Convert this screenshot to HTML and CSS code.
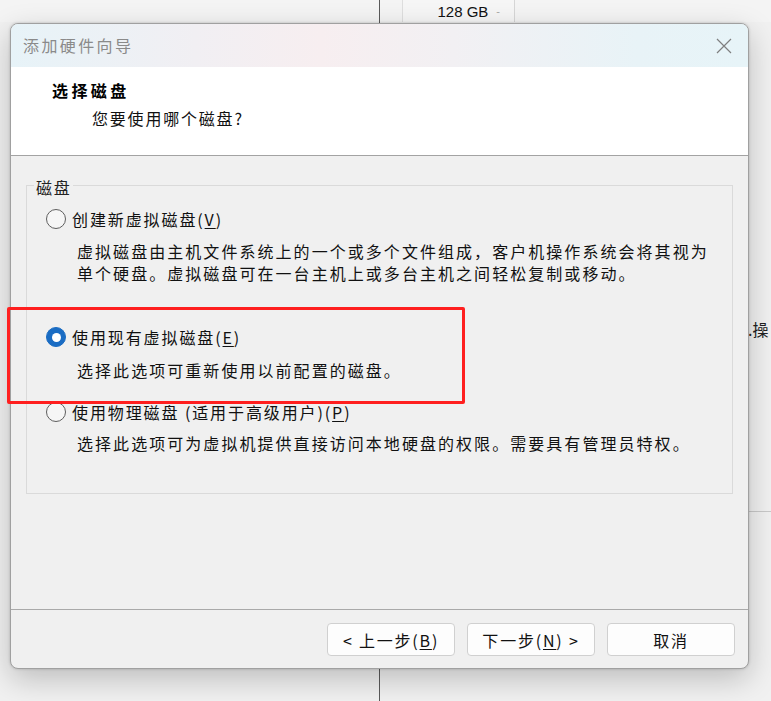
FILE: index.html
```html
<!DOCTYPE html>
<html lang="zh-CN">
<head>
<meta charset="utf-8">
<title>添加硬件向导</title>
<link rel="stylesheet" href="styles.css">
</head>
<body>
<div class="desktop">
  <div class="topstrip">
    <div class="cell"><span class="size">128 GB</span><span class="dash">-</span></div>
  </div>
  <div class="vline"></div>
  <div class="side-text">.操</div>
  <div class="side-line"></div>

  <div class="dialog">
    <div class="titlebar">
      <span class="title">添加硬件向导</span>
      <svg class="close" width="16" height="16" viewBox="0 0 16 16"><path d="M1 1L15 15M15 1L1 15" stroke="#7f7f7f" stroke-width="1.2" fill="none"/></svg>
    </div>
    <div class="header">
      <div class="h-title">选择磁盘</div>
      <div class="h-sub">您要使用哪个磁盘?</div>
    </div>
    <div class="body">
      <div class="content">
        <div class="group">
          <div class="legend">磁盘</div>
          <div class="option opt1">
            <div class="opt-row"><span class="radio"></span><span class="label">创建新虚拟磁盘(<u>V</u>)</span></div>
            <div class="desc">虚拟磁盘由主机文件系统上的一个或多个文件组成，客户机操作系统会将其视为<br>单个硬盘。虚拟磁盘可在一台主机上或多台主机之间轻松复制或移动。</div>
          </div>
          <div class="option opt2">
            <div class="opt-row"><span class="radio checked"></span><span class="label">使用现有虚拟磁盘(<u>E</u>)</span></div>
            <div class="desc d2">选择此选项可重新使用以前配置的磁盘。</div>
          </div>
          <div class="option opt3">
            <div class="opt-row"><span class="radio"></span><span class="label">使用物理磁盘 (适用于高级用户)(<u>P</u>)</span></div>
            <div class="desc d3">选择此选项可为虚拟机提供直接访问本地硬盘的权限。需要具有管理员特权。</div>
          </div>
        </div>
      </div>
      <div class="footer">
        <button class="btn">&lt; 上一步(<u>B</u>)</button>
        <button class="btn">下一步(<u>N</u>) &gt;</button>
        <button class="btn">取消</button>
      </div>
    </div>
  </div>

  <div class="mark"></div>
</div>
</body>
</html>
```
FILE: styles.css
```css
* { box-sizing: border-box; }

html, body {
  margin: 0;
  padding: 0;
}

body {
  width: 771px;
  height: 701px;
  overflow: hidden;
  background: #f1f1f1;
  font-family: "Noto Sans CJK SC", "Noto Sans", sans-serif;
  color: #111;
}

.desktop {
  position: relative;
  width: 771px;
  height: 701px;
  background: #f1f1f1;
}

.topstrip {
  height: 22px;
  background: #f4f4f4;
  position: relative;
}

.cell {
  position: absolute;
  left: 402px;
  top: 0;
  width: 113px;
  height: 22px;
  border-left: 1px solid #dedede;
  border-right: 1px solid #d6d6d6;
  background: #f6f6f6;
  display: flex;
  align-items: center;
  justify-content: flex-end;
  padding-right: 14px;
  gap: 8px;
  font-family: "Liberation Sans", Arial, sans-serif;
  font-size: 15px;
  color: #111;
}

.cell .dash {
  color: #a8a8a8;
  font-size: 11px;
}

.vline {
  position: absolute;
  left: 379px;
  top: 0;
  width: 1px;
  height: 701px;
  background: #5a5a5a;
}

.side-text {
  position: absolute;
  left: 748px;
  top: 318px;
  font-size: 16px;
  line-height: 22px;
  color: #222;
  white-space: nowrap;
}

.side-line {
  position: absolute;
  left: 740px;
  top: 511px;
  width: 40px;
  height: 1px;
  background: #c9c9c9;
}

.dialog {
  position: absolute;
  left: 10px;
  top: 23px;
  width: 739px;
  height: 646px;
  border: 1px solid #a0a0a0;
  border-radius: 8px;
  background: #f0f0f0;
  box-shadow: 0 10px 30px rgba(0, 0, 0, 0.22), 0 0 3px rgba(0, 0, 0, 0.18);
  display: flex;
  flex-direction: column;
  overflow: hidden;
  z-index: 2;
}

.titlebar {
  flex: none;
  height: 43px;
  display: flex;
  align-items: center;
  justify-content: space-between;
  padding: 0 16px 0 12px;
  background: linear-gradient(90deg, #e7f3f8 0%, #f1eff3 25%, #f7eef0 42%, #f2f0f3 60%, #e8f3f7 85%, #e7f4f8 100%);
}

.title {
  font-size: 16px;
  letter-spacing: 2.4px;
  color: #8a8a8a;
  line-height: 22px;
  margin-top: -2px;
}

.close { display: block; }

.header {
  flex: none;
  height: 89px;
  background: #fff;
  border-bottom: 1px solid #a3a3a3;
  padding: 12px 0 0 41px;
}

.h-title {
  font-size: 16px;
  font-weight: bold;
  letter-spacing: 3.4px;
  line-height: 22px;
  color: #000;
}

.h-sub {
  margin: 6px 0 0 40px;
  font-size: 16px;
  letter-spacing: 1.8px;
  line-height: 22px;
  color: #111;
}

.body {
  flex: 1;
  display: flex;
  flex-direction: column;
}

.content {
  flex: 1;
  padding: 29px 15px 0;
}

.group {
  height: 309px;
  border: 1px solid #dadada;
  padding-left: 19px;
}

.legend {
  width: fit-content;
  margin: -10px 0 0 -12px;
  padding: 0 2px;
  height: 22px;
  line-height: 22px;
  background: #f0f0f0;
  font-size: 16px;
  letter-spacing: 1.7px;
  color: #222;
}

.opt1 { margin-top: 10px; }
.opt2 { margin-top: 42px; }
.opt3 { margin-top: 20px; }

.opt-row {
  display: flex;
  align-items: center;
  height: 22px;
  gap: 6px;
}

.radio {
  flex: none;
  width: 20px;
  height: 20px;
  border-radius: 50%;
  border: 1px solid #5e5e5e;
  background: #f6f6f6;
  display: flex;
  align-items: center;
  justify-content: center;
}

.radio.checked {
  background: #1a6cc3;
  border-color: #1a6cc3;
}

.radio.checked::after {
  content: "";
  width: 9px;
  height: 9px;
  border-radius: 50%;
  background: #fff;
}

.label {
  font-size: 16px;
  letter-spacing: 1.9px;
  line-height: 22px;
  white-space: nowrap;
  color: #111;
}

.desc {
  margin: 10px 0 0 31px;
  font-size: 16px;
  letter-spacing: 2.05px;
  line-height: 22px;
  white-space: nowrap;
  color: #111;
}

.desc.d2 { margin-top: 11px; }
.desc.d3 { margin-top: 9px; }

u {
  text-decoration: underline;
  text-underline-offset: 2px;
  text-decoration-thickness: 1px;
}

.footer {
  flex: none;
  height: 59px;
  border-top: 1px solid #a9a9a9;
  display: flex;
  justify-content: flex-end;
  align-items: flex-start;
  gap: 12px;
  padding: 13px 13px 0 0;
}

.btn {
  width: 128px;
  height: 33px;
  border: 1px solid #d0d0d0;
  border-radius: 4px;
  background: #fdfdfd;
  font-family: "Noto Sans CJK SC", "Noto Sans", sans-serif;
  font-size: 16px;
  letter-spacing: 1.8px;
  color: #111;
  padding: 0;
  line-height: 22px;
}

.mark {
  position: absolute;
  left: 7px;
  top: 307px;
  width: 458px;
  height: 97px;
  border: 3px solid #ff1f1f;
  border-radius: 2px;
  z-index: 5;
}
```
